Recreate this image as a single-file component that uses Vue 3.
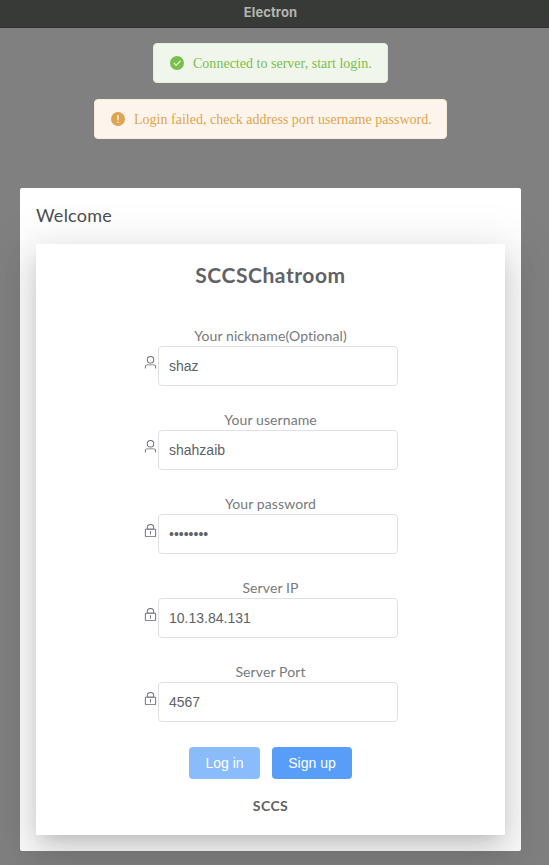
<script setup>
import { reactive } from 'vue'

const userIcon = [
  'M512 512a192 192 0 1 0 0-384 192 192 0 0 0 0 384m0 64a256 256 0 1 1 0-512 256 256 0 0 1 0 512m320 320v-96a96 96 0 0 0-96-96H288a96 96 0 0 0-96 96v96a32 32 0 1 1-64 0v-96a160 160 0 0 1 160-160h448a160 160 0 0 1 160 160v96a32 32 0 1 1-64 0',
]
const lockIcon = [
  'M224 448a32 32 0 0 0-32 32v384a32 32 0 0 0 32 32h576a32 32 0 0 0 32-32V480a32 32 0 0 0-32-32zm0-64h576a96 96 0 0 1 96 96v384a96 96 0 0 1-96 96H224a96 96 0 0 1-96-96V480a96 96 0 0 1 96-96',
  'M512 544a32 32 0 0 1 32 32v192a32 32 0 1 1-64 0V576a32 32 0 0 1 32-32m192-160v-64a192 192 0 1 0-384 0v64zM512 64a256 256 0 0 1 256 256v128H256V320A256 256 0 0 1 512 64',
]

const messages = [
  {
    type: 'success',
    text: 'Connected to server, start login.',
    icon: 'M512 64a448 448 0 1 1 0 896 448 448 0 0 1 0-896m-55.808 536.384-99.52-99.584a38.4 38.4 0 1 0-54.336 54.336l126.72 126.72a38.272 38.272 0 0 0 54.336 0l262.4-262.464a38.4 38.4 0 1 0-54.272-54.336z',
  },
  {
    type: 'warning',
    text: 'Login failed, check address port username password.',
    icon: 'M512 64a448 448 0 1 1 0 896 448 448 0 0 1 0-896m0 192a58.432 58.432 0 0 0-58.24 63.744l23.36 256.384a35.072 35.072 0 0 0 69.76 0l23.296-256.384A58.432 58.432 0 0 0 512 256m0 512a51.2 51.2 0 1 0 0-102.4 51.2 51.2 0 0 0 0 102.4',
  },
]

const fields = reactive([
  { key: 'nickname', label: 'Your nickname(Optional)', value: 'shaz', icon: userIcon },
  { key: 'username', label: 'Your username', value: 'shahzaib', icon: userIcon },
  { key: 'password', label: 'Your password', value: '••••••••', icon: lockIcon },
  { key: 'ip', label: 'Server IP', value: '10.13.84.131', icon: lockIcon },
  { key: 'port', label: 'Server Port', value: '4567', icon: lockIcon },
])
</script>

<template>
  <div class="window">
    <header class="titlebar">Electron</header>
    <div class="messages">
      <div v-for="m in messages" :key="m.type" class="message" :class="m.type">
        <svg class="message-icon" viewBox="0 0 1024 1024"><path :d="m.icon" /></svg>
        <span class="message-text">{{ m.text }}</span>
      </div>
    </div>
    <section class="dialog">
      <div class="dialog-title">Welcome</div>
      <form class="card" @submit.prevent>
        <h2 class="heading">SCCSChatroom</h2>
        <div v-for="f in fields" :key="f.key" class="field">
          <span class="label">{{ f.label }}</span>
          <div class="control">
            <svg class="field-icon" viewBox="0 0 1024 1024">
              <path v-for="d in f.icon" :key="d" :d="d" />
            </svg>
            <div class="input">{{ f.value }}</div>
          </div>
        </div>
        <div class="actions">
          <button class="button login" disabled>Log in</button>
          <button class="button signup">Sign up</button>
        </div>
        <div class="footer">SCCS</div>
      </form>
    </section>
  </div>
</template>

<style>
body {
  background: #808080;
}
</style>

<style scoped>
.window {
  height: 865px;
  overflow: hidden;
  background: #808080;
  box-sizing: border-box;
  font-family: Lato, "Open Sans", sans-serif;
  font-variant-ligatures: none;
}
.window * {
  box-sizing: border-box;
}
.titlebar {
  height: 28px;
  background: #383a38;
  border-bottom: 1px solid #2e302e;
  color: #b3b4b3;
  font: bold 13px/25px Inter, sans-serif;
  letter-spacing: 0.1px;
  text-align: center;
  padding-right: 8px;
}
.messages {
  display: flex;
  flex-direction: column;
  align-items: center;
  gap: 16px;
  padding-top: 15px;
  padding-right: 8px;
  height: 160px;
}
.message {
  display: flex;
  align-items: center;
  height: 40px;
  padding: 0 0 0 15px;
  border: 1px solid;
  border-radius: 4px;
  font: 14px/16px "Liberation Serif", serif;
  letter-spacing: 0.015px;
  white-space: nowrap;
}
.message-text {
  padding-top: 1px;
}
.success {
  width: 235px;
  background: #f0f6eb;
  border-color: #e1f1d8;
  color: #7abf4c;
}
.warning {
  width: 353px;
  background: #fdf5ec;
  border-color: #f8ead7;
  color: #dea450;
}
.message-icon {
  flex: none;
  width: 16px;
  height: 16px;
  margin-right: 8px;
  fill: currentColor;
}
.dialog {
  width: 501px;
  height: 663px;
  margin-left: 20px;
  padding: 16px;
  background: #fff;
  border-radius: 2px;
}
.dialog-title {
  height: 40px;
  font-size: 18px;
  line-height: 22px;
  letter-spacing: 0.25px;
  color: #4a4c4e;
}
.card {
  display: flex;
  flex-direction: column;
  align-items: center;
  height: 591px;
  background: #fff;
  color: #606266;
  box-shadow: 0 16px 48px 16px rgba(0, 0, 0, 0.08), 0 12px 32px rgba(0, 0, 0, 0.12),
    0 8px 16px -8px rgba(0, 0, 0, 0.16);
}
.heading {
  margin: 17px 0 33px;
  font-size: 21px;
  line-height: 28px;
  letter-spacing: 0.55px;
}
.field {
  display: flex;
  flex-direction: column;
  align-items: center;
  height: 84px;
  padding-top: 4px;
}
.label {
  height: 20px;
  font-size: 14px;
  line-height: 20px;
  letter-spacing: 0.1px;
  color: #77797c;
}
.control {
  display: flex;
  align-items: flex-start;
}
.field-icon {
  width: 15px;
  height: 15px;
  margin-top: 8.5px;
  fill: #68696d;
}
.input {
  width: 240px;
  height: 40px;
  padding: 0 10px;
  border: 1px solid #dfe0e6;
  border-radius: 4px;
  font: 14px/38px "Liberation Sans", sans-serif;
}
.actions {
  display: flex;
  gap: 12px;
  margin-top: 5px;
}
.button {
  height: 32px;
  padding: 0;
  border: 0;
  border-radius: 4px;
  color: #fff;
  font: 14px/32px "Liberation Sans", sans-serif;
}
.login {
  width: 71px;
  background: #8abbfa;
}
.signup {
  width: 80px;
  background: #589ef8;
}
.footer {
  margin-top: 17px;
  font-size: 14px;
  line-height: 20px;
  letter-spacing: 0.4px;
  font-weight: bold;
}
</style>
